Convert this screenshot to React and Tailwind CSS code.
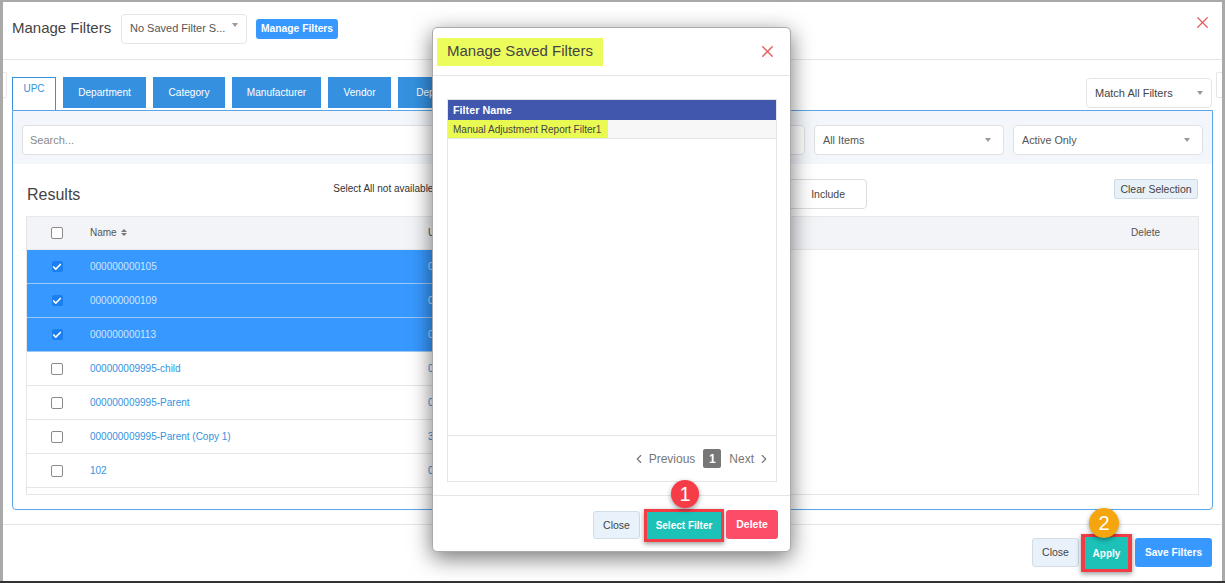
import React from 'react';
import { ChevronLeft, ChevronRight, X, Check } from 'lucide-react';

const tabs = [
  { label: 'Department', w: 'w-[83px]' },
  { label: 'Category', w: 'w-[72px]' },
  { label: 'Manufacturer', w: 'w-[89px]' },
  { label: 'Vendor', w: 'w-[63px]' },
  { label: 'Department Group', w: 'w-[120px]' },
];

const rows = [
  { name: '000000000105', code: '0', selected: true },
  { name: '000000000109', code: '0', selected: true },
  { name: '000000000113', code: '0', selected: true },
  { name: '000000009995-child', code: '0' },
  { name: '000000009995-Parent', code: '0' },
  { name: '000000009995-Parent (Copy 1)', code: '3' },
  { name: '102', code: '0' },
];

const Caret = ({ className = '' }) => (
  <span className={`w-0 h-0 border-x-[3.5px] border-x-transparent border-t-[4px] border-t-[#999] ${className}`} />
);

const Checkbox = ({ checked }) =>
  checked ? (
    <span className="flex items-center justify-center w-[11px] h-[11px] bg-[#1a7ff0] rounded-[2px]">
      <Check className="w-[10px] h-[10px] text-white" strokeWidth={4} />
    </span>
  ) : (
    <span className="block w-[12px] h-[12px] bg-white border border-[#8a8a8a] rounded-[2px]" />
  );

const Select = ({ label, className = '' }) => (
  <div className={`flex items-center justify-between h-[30px] px-2 bg-white border border-[#e0e0e0] rounded text-[10.8px] text-[#555] ${className}`}>
    <span>{label}</span>
    <Caret className="mr-1" />
  </div>
);

const Badge = ({ n, className }) => (
  <span className={`absolute flex items-center justify-center rounded-full text-white text-[20px] shadow-[0_2px_5px_rgba(0,0,0,0.4)] ${className}`}>
    {n}
  </span>
);

const App = () => {
  return (
    <div className="relative w-[1225px] h-[583px] overflow-hidden bg-white text-[#444] font-['Liberation_Sans',Arial,sans-serif]">
      <div className="flex flex-col h-[581px] border-x-[3px] border-t-[2px] border-[#a9a9a9] border-b-0">
        {/* Header */}
        <div className="flex items-center h-[58px] px-[9px] pb-[4px] border-b border-[#e6e6e6] shrink-0">
          <span className="text-[15px] w-[109px] text-[#444]">Manage Filters</span>
          <div className="flex items-center justify-between w-[126px] h-[30px] pl-2 pr-2 border border-[#e4e4e4] rounded text-[11px] text-[#555]">
            <span>No Saved Filter S...</span>
            <Caret className="mb-2" />
          </div>
          <span className="ml-[9px] px-[5px] h-[20px] leading-[20px] rounded-[3px] bg-[#3799ff] text-white text-[10.3px] font-bold">Manage Filters</span>
          <X className="ml-auto mb-3 mr-[1px] w-[19px] h-[19px] text-[#e06060]" strokeWidth={1.6} />
        </div>

        {/* Tabs */}
        <div className="flex items-start justify-between h-[50px] pt-[17px] pl-[9px] pr-[10px] shrink-0">
          <div className="flex items-start gap-[7px]">
            <div className="w-[44px] h-[33px] pt-0 text-center text-[10px] leading-[22px] text-[#3592e0] bg-white border border-b-0 border-[#3592e0]">UPC</div>
            {tabs.map((t) => (
              <div key={t.label} className={`${t.w} h-[31px] flex items-center justify-center overflow-hidden whitespace-nowrap bg-[#3591e0] text-white text-[10.1px]`}>
                {t.label}
              </div>
            ))}
          </div>
          <div className="flex items-center justify-between w-[126px] h-[30px] mt-[1px] px-2 bg-white border border-[#e4e4e4] rounded text-[11px] text-[#444]">
            <span>Match All Filters</span>
            <Caret />
          </div>
        </div>

        {/* Panel */}
        <div className="flex flex-col h-[400px] mx-[9px] border border-[#5aa5ea] rounded-b overflow-hidden shrink-0">
          <div className="flex items-center gap-[9px] h-[53px] pt-[5px] px-[9px] bg-[#f3f6fb] shrink-0">
            <div className="flex items-center flex-1 h-[30px] px-[7px] bg-white border border-[#e0e0e0] rounded text-[11px] text-[#888]">Search...</div>
            <Select label="All Items" className="w-[190px]" />
            <Select label="Active Only" className="w-[190px]" />
          </div>

          <div className="flex items-start h-[52px] pl-[14px] pr-[14px] shrink-0">
            <span className="mt-[19px] text-[16px] text-[#444]">Results</span>
            <span className="ml-[253px] mt-[17px] text-[10px] text-[#333]">Select All not available</span>
            <div className="ml-auto mt-[15px] mr-[247px] flex items-center justify-end w-[120px] h-[30px] pr-[21px] pt-[1px] bg-white border border-[#ddd] rounded text-[10.5px] text-[#444]">Include</div>
            <div className="mt-[15px] w-[84px] h-[20px] text-center leading-[18px] bg-[#e8f0f8] border border-[#cfdbe6] rounded-[2px] text-[10.5px] text-[#444]">Clear Selection</div>
          </div>

          {/* Results table */}
          <div className="flex flex-col mx-[13px] h-[279px] border border-t-0 border-[#e6e6e6] overflow-hidden">
            <div className="flex items-center h-[34px] bg-[#f2f4f7] border-y border-[#e8e8e8] text-[10px] text-[#555] shrink-0">
              <span className="flex justify-center w-[60px]"><Checkbox /></span>
              <span className="w-[341px] pl-[3px] pb-px flex items-center gap-[4px]">
                Name
                <span className="flex flex-col gap-[1px]">
                  <span className="w-0 h-0 border-x-[3px] border-x-transparent border-b-[3px] border-b-[#777]" />
                  <span className="w-0 h-0 border-x-[3px] border-x-transparent border-t-[3px] border-t-[#777]" />
                </span>
              </span>
              <span className="pb-px">U</span>
              <span className="ml-auto mr-[38px] pb-px">Delete</span>
            </div>
            {rows.map((r) => (
              <div
                key={r.name}
                className={`flex items-center w-[600px] h-[34px] shrink-0 border-b text-[10px] ${r.selected ? 'bg-[#3799ff] border-[#9cc9f7] text-[#cfe5ff]' : 'bg-white border-[#e6e6e6] text-[#3592e0]'}`}
              >
                <span className="flex justify-center w-[60px]"><Checkbox checked={r.selected} /></span>
                <span className="w-[341px] pl-[3px] pb-px">{r.name}</span>
                <span className="pb-px">{r.code}</span>
              </div>
            ))}
          </div>
        </div>

        {/* Footer */}
        <div className="flex items-start justify-end h-[57px] mt-[14px] pt-[13px] pr-[10px] border-t border-[#e6e6e6] shrink-0">
          <div className="w-[47px] h-[29px] leading-[27px] text-center bg-[#e9f2fb] border border-[#d3dde8] rounded-[3px] text-[10.5px] text-[#444]">Close</div>
          <div className="w-[51px] h-[38px] -mt-[4px] ml-[2px] leading-[34px] text-center bg-[#1cc2b8] border-x-[4px] border-y-[3px] border-[#f23c46] text-white text-[10px] font-bold shadow-[0_2px_5px_rgba(0,0,0,0.4)]">Apply</div>
          <div className="w-[77px] h-[29px] ml-[3px] leading-[29px] text-center bg-[#3799ff] rounded-[3px] text-white text-[10.2px] font-bold">Save Filters</div>
        </div>
      </div>
      <div className="h-[2px] bg-[#333]" />

      {/* Tab scroll arrows peeking out from the sides */}
      <span className="absolute left-[3px] top-[72px] w-[4px] h-[26px] bg-white border border-l-0 border-[#e6e6e6] rounded-r-[2px]" />
      <span className="absolute left-[1216px] top-[72px] w-[6px] h-[26px] bg-white border border-r-0 border-[#e6e6e6] rounded-l-[2px]" />

      <Badge n="2" className="left-[1089px] top-[508px] w-[30px] h-[30px] bg-[#f5a50e]" />

      {/* Manage Saved Filters dialog */}
      <div className="absolute left-[432px] top-[27px] flex flex-col w-[359px] h-[525px] bg-white rounded-[5px] border border-[#aaa] shadow-[0_6px_22px_rgba(0,0,0,0.55)]">
        <div className="flex items-center justify-between h-[48px] pl-[4px] pr-[13px] border-b border-[#e6e6e6] shrink-0">
          <span className="flex items-center h-[28px] px-[10px] bg-[#ecfc5c] text-[15px] text-[#444]">Manage Saved Filters</span>
          <X className="w-[19px] h-[19px] text-[#e06060]" strokeWidth={1.8} />
        </div>

        <div className="flex flex-col w-[330px] h-[383px] mt-[23px] ml-[14px] border border-[#e6e6e6] shrink-0">
          <div className="flex items-center h-[20px] px-[5px] bg-[#4157ae] text-white text-[10.8px] font-bold shrink-0">Filter Name</div>
          <div className="h-[19px] bg-[#f7f7f8] border-b border-[#e6e6ee] shrink-0">
            <span className="flex items-center w-[160px] h-full px-[5px] bg-[#e9fb52] text-[10px] text-[#444] whitespace-nowrap">Manual Adjustment Report Filter1</span>
          </div>
          <div className="flex-1 border-b border-[#e6e6e6]" />
          <div className="flex items-center justify-end h-[45px] pr-[5px] text-[12px] text-[#777] shrink-0">
            <ChevronLeft className="w-[14px] h-[14px]" />
            <span className="ml-[3px]">Previous</span>
            <span className="flex items-center justify-center w-[18px] h-[19px] mx-[8px] bg-[#777] rounded-[2px] text-white font-bold">1</span>
            <span>Next</span>
            <ChevronRight className="ml-[3px] w-[14px] h-[14px]" />
          </div>
        </div>

        <div className="flex items-start justify-end h-[56px] mt-[13px] pt-[15px] pr-[12px] border-t border-[#e6e6e6]">
          <div className="w-[47px] h-[28px] leading-[26px] text-center bg-[#e9f2fb] border border-[#d3dde8] rounded-[3px] text-[10.5px] text-[#444]">Close</div>
          <div className="w-[80px] h-[33px] -mt-[2px] ml-[4px] leading-[27px] text-center bg-[#1cc2b8] border-[3px] border-[#f23c46] text-white text-[10px] font-bold shadow-[0_2px_5px_rgba(0,0,0,0.4)]">Select Filter</div>
          <div className="w-[52px] h-[29px] -mt-[1px] ml-[2px] leading-[29px] text-center bg-[#fb4d67] rounded-[3px] text-white text-[10.5px] font-bold">Delete</div>
        </div>

        <Badge n="1" className="left-[238px] top-[452px] w-7 h-7 bg-[#f63c46]" />
      </div>
    </div>
  );
};

export default App;
